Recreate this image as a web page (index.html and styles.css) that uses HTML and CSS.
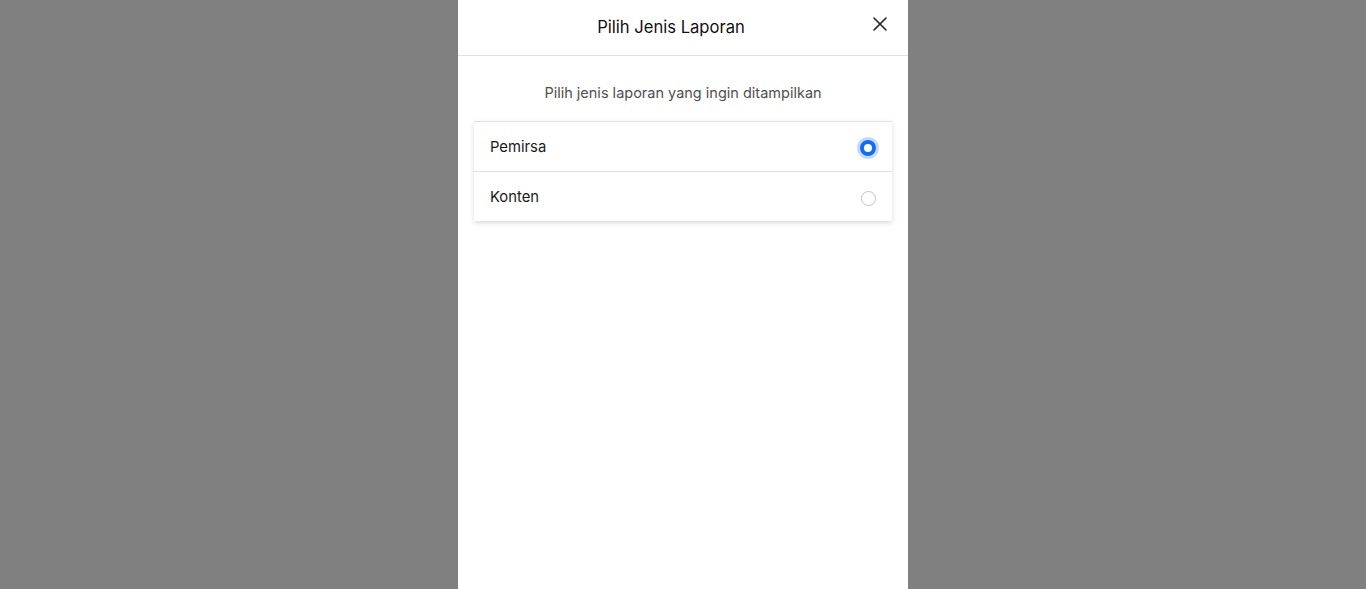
FILE: index.html
```html
<!DOCTYPE html>
<html lang="id">
<head>
<meta charset="utf-8">
<title>Pilih Jenis Laporan</title>
<link rel="stylesheet" href="styles.css">
</head>
<body>
<div class="backdrop">
  <div class="modal">
    <div class="modal-header">
      <h1 class="modal-title">Pilih Jenis Laporan</h1>
      <button class="close" aria-label="Tutup">
        <svg width="14" height="14" viewBox="0 0 14 14"><path d="M1 1L13 13M13 1L1 13" stroke="#222" stroke-width="1.6" stroke-linecap="round"/></svg>
      </button>
    </div>
    <div class="modal-body">
      <p class="subtitle">Pilih jenis laporan yang ingin ditampilkan</p>
      <div class="list">
        <label class="item">
          <span>Pemirsa</span>
          <input type="radio" name="jenis" class="radio focus" checked>
        </label>
        <label class="item">
          <span>Konten</span>
          <input type="radio" name="jenis" class="radio">
        </label>
      </div>
    </div>
  </div>
</div>
</body>
</html>
```

FILE: styles.css
```css
* { box-sizing: border-box; }
html, body { margin: 0; height: 100%; }
body {
  font-family: Inter, "Noto Sans", sans-serif;
  background: #808080;
  color: #212529;
}
.backdrop {
  height: 100%;
  display: flex;
  justify-content: center;
}
.modal {
  width: 450px;
  height: 100%;
  background: #fff;
  display: flex;
  flex-direction: column;
}
.modal-header {
  height: 56px;
  border-bottom: 1px solid #e2e2e2;
  display: flex;
  align-items: center;
  padding: 0 16px;
}
.modal-title {
  flex: 1;
  margin: 0;
  text-align: center;
  font-size: 16.6px;
  font-weight: 400;
  color: #111;
  padding-bottom: 1px;
}
.close {
  border: 0;
  background: none;
  padding: 0;
  width: 24px;
  height: 24px;
  margin-top: -7px;
  display: flex;
  align-items: center;
  justify-content: center;
  cursor: pointer;
}
.modal-body {
  padding: 0 16px;
}
.subtitle {
  margin: 28px 0 19px;
  text-align: center;
  font-size: 14.5px;
  color: #4f4f4f;
  line-height: 18px;
}
.list {
  background: #fff;
  border-top: 1px solid #e4e4e4;
  box-shadow: 0 2px 5px rgba(0,0,0,0.15);
}
.item {
  height: 49px;
  display: flex;
  align-items: center;
  justify-content: space-between;
  padding: 0 16px;
  font-size: 14.8px;
  color: #1a1a1a;
}
.item:last-child { height: 50px; }
.item + .item { border-top: 1px solid #e2e2e2; }
.radio {
  appearance: none;
  -webkit-appearance: none;
  margin: 0;
  width: 15px;
  height: 15px;
  border-radius: 50%;
  border: 1px solid #c4c4c4;
  background: #fff;
  margin-top: 3px;
  margin-right: 0;
}
.radio:checked {
  border: 4px solid #0d6efd;
  background: #fff;
  width: 16px;
  height: 16px;
}
.radio.focus {
  box-shadow: 0 0 0 3px rgba(13,110,253,0.25);
}
```
